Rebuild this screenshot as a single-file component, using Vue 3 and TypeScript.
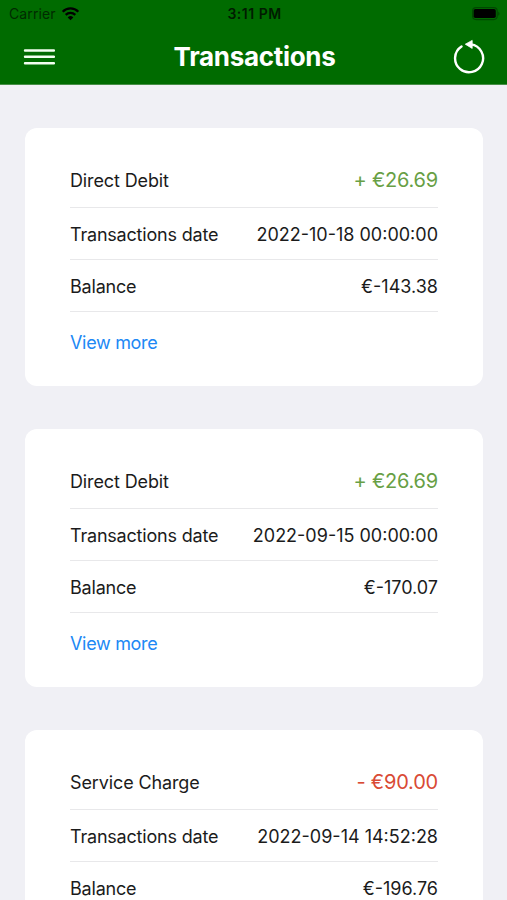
<script setup lang="ts">
interface Transaction {
  title: string
  amount: string
  credit: boolean
  date: string
  balance: string
  expandable: boolean
}

const transactions: Transaction[] = [
  { title: 'Direct Debit', amount: '+ €26.69', credit: true, date: '2022-10-18 00:00:00', balance: '€-143.38', expandable: true },
  { title: 'Direct Debit', amount: '+ €26.69', credit: true, date: '2022-09-15 00:00:00', balance: '€-170.07', expandable: true },
  { title: 'Service Charge', amount: '- €90.00', credit: false, date: '2022-09-14 14:52:28', balance: '€-196.76', expandable: false },
]
</script>

<template>
  <div class="screen">
    <header class="header">
      <div class="status">
        <div class="carrier">
          <span>Carrier</span>
          <svg class="wifi" width="19" height="14" viewBox="0 0 18 14">
            <path d="M1.2 4.7a11 11 0 0 1 15.6 0M4.2 7.9a6.9 6.9 0 0 1 9.6 0" fill="none" stroke="currentColor" stroke-width="2.3" />
            <path d="M9 13.2 6.2 10.4a4 4 0 0 1 5.6 0z" fill="currentColor" />
          </svg>
        </div>
        <span class="time">3:11 PM</span>
        <svg class="battery" width="28" height="14" viewBox="0 0 28 14">
          <rect x="0.6" y="0.6" width="24.6" height="12" rx="3.5" fill="none" stroke="#004800" stroke-width="1.2" />
          <rect x="1.6" y="2" width="22.2" height="9" rx="1.8" fill="#000" />
          <path d="M26.2 4.6v4.2q1.3-.7 1.3-2.1t-1.3-2.1z" fill="#004800" />
        </svg>
      </div>
      <nav class="bar">
        <button class="icon-button" aria-label="Menu">
          <svg width="32" height="20" viewBox="0 0 32 20">
            <path d="M2 4.5h29M2 10.8h29M2 17.2h29" stroke="#f2fff0" stroke-width="2.4" stroke-linecap="round" />
          </svg>
        </button>
        <h1 class="title">Transactions</h1>
        <button class="icon-button" aria-label="Refresh">
          <svg width="34" height="36" viewBox="0 0 34 36">
            <path d="M9.5 8.5A14 14 0 1 0 19 6.4" fill="none" stroke="#fff" stroke-width="2.4" stroke-linecap="round" />
            <path d="M13.3 6.2 20.2 2.4 20.2 10.4z" fill="#fff" stroke="#fff" stroke-width="0.8" stroke-linejoin="round" />
          </svg>
        </button>
      </nav>
    </header>
    <main class="list">
      <article v-for="item in transactions" :key="item.date" class="card">
        <div class="row heading">
          <span class="label">{{ item.title }}</span>
          <span class="amount" :class="item.credit ? 'credit' : 'debit'">{{ item.amount }}</span>
        </div>
        <div class="row">
          <span class="label">Transactions date</span>
          <span class="value">{{ item.date }}</span>
        </div>
        <div class="row">
          <span class="label">Balance</span>
          <span class="value">{{ item.balance }}</span>
        </div>
        <div v-if="item.expandable" class="action"><a class="more">View more</a></div>
      </article>
    </main>
  </div>
</template>

<style>
body {
  background: #f0f0f5;
}
</style>

<style scoped>
.screen {
  height: 900px;
  overflow: hidden;
  box-sizing: border-box;
  background: #f0f0f5;
  color: #1b1b1b;
  font-family: Inter, "Liberation Sans", sans-serif;
}
.header {
  height: 85px;
  box-sizing: border-box;
  background: #006b00;
  border-bottom: 1px solid #478e47;
}
.status {
  display: grid;
  grid-template-columns: 1fr auto 1fr;
  align-items: center;
  height: 27px;
  padding: 0 7px 0 9px;
  color: #002a00;
  font-size: 14px;
}
.carrier {
  display: flex;
  align-items: center;
  gap: 5px;
  letter-spacing: 0.1px;
}
.wifi {
  color: #000;
}
.time {
  color: #001c00;
  font-size: 14px;
  font-weight: 600;
  letter-spacing: 0.5px;
}
.battery {
  justify-self: end;
}
.bar {
  display: grid;
  grid-template-columns: 34px 1fr 34px;
  align-items: center;
  height: 58px;
  padding: 0 21px 0 23px;
}
.icon-button {
  display: flex;
  padding: 0;
  border: 0;
  background: none;
}
.title {
  margin: 0;
  padding-top: 2px;
  color: #fff;
  text-align: center;
  font-size: 26px;
  line-height: 32px;
  font-weight: 700;
  letter-spacing: -0.32px;
}
.list {
  display: flex;
  flex-direction: column;
  gap: 43px;
  padding: 43px 24px 0 25px;
}
.card {
  flex: none;
  height: 258px;
  box-sizing: border-box;
  padding: 26px 45px 0;
  border-radius: 12px;
  background: #fff;
}
.row {
  display: flex;
  align-items: center;
  justify-content: space-between;
  height: 52px;
  box-sizing: border-box;
  padding-top: 2px;
  border-bottom: 1px solid #e8e8ea;
  font-size: 18px;
  white-space: nowrap;
}
.heading {
  height: 54px;
  padding: 0 0 2px;
}
.label {
  letter-spacing: -0.2px;
}
.heading .label {
  padding-top: 2px;
  letter-spacing: -0.12px;
}
.amount {
  font-size: 20px;
  letter-spacing: -0.2px;
}
.credit {
  color: #689f45;
}
.debit {
  color: #d94a35;
}
.action {
  display: flex;
  align-items: center;
  height: 60px;
  font-size: 18px;
  letter-spacing: -0.32px;
}
.more {
  color: #2088f5;
}
</style>
